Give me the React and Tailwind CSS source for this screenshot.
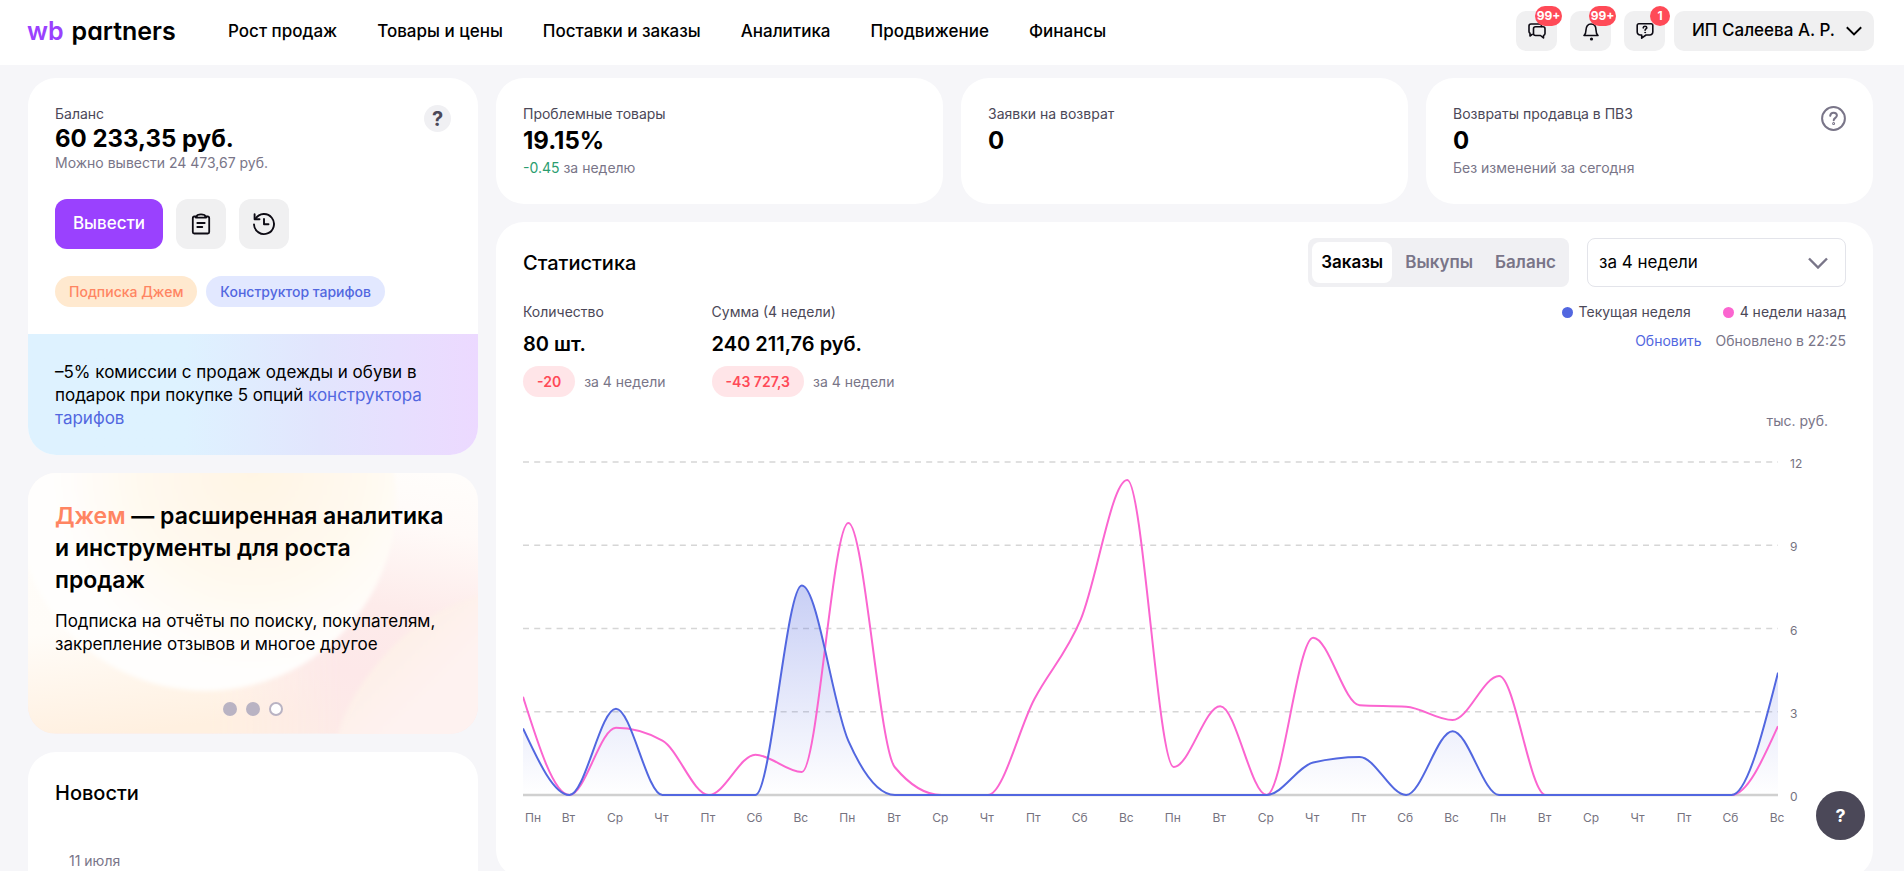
import { useState } from 'react';

const NAV = ['Рост продаж', 'Товары и цены', 'Поставки и заказы', 'Аналитика', 'Продвижение', 'Финансы'];
const TABS = ['Заказы', 'Выкупы', 'Баланс'];
const DAYS = ['Пн', 'Вт', 'Ср', 'Чт', 'Пт', 'Сб', 'Вс'];

const CURRENT = [2.4, 0, 3.11, 0, 0, 0, 7.55, 1.95, 0, 0, 0, 0, 0, 0, 0, 0, 0, 1.17, 1.37, 0, 2.3, 0, 0, 0, 0, 0, 0, 4.41];
const PREVIOUS = [3.54, 0, 2.42, 1.96, 0, 1.45, 0.83, 9.8, 1, 0, 0, 3.45, 6.33, 11.35, 1.01, 3.2, 0, 5.67, 3.23, 3.18, 2.7, 4.29, 0, 0, 0, 0, 0, 2.48];

// Chart geometry
const PLOT_W = 1255;
const PLOT_TOP = 16;
const PLOT_BOTTOM = 349;
const MAX = 12;

const toPoints = (values) =>
  values.map((v, i) => [
    (i * PLOT_W) / (values.length - 1),
    PLOT_BOTTOM - (v / MAX) * (PLOT_BOTTOM - PLOT_TOP),
  ]);

// Monotone cubic interpolation, so the line never dips below zero
function linePath(points) {
  const n = points.length;
  const slope = points.slice(1).map((p, i) => (p[1] - points[i][1]) / (p[0] - points[i][0]));
  const t = points.map((_, i) => {
    if (i === 0 || i === n - 1) return 0;
    const a = slope[i - 1];
    const b = slope[i];
    if (a * b <= 0) return 0;
    return Math.sign(a) * 2 * Math.min(Math.abs(a), Math.abs(b), Math.abs(a + b) / 4);
  });
  t[0] = (3 * slope[0] - t[1]) / 2;
  t[n - 1] = (3 * slope[n - 2] - t[n - 2]) / 2;

  let d = `M${points[0][0]},${points[0][1]}`;
  for (let i = 1; i < n; i++) {
    const [x0, y0] = points[i - 1];
    const [x1, y1] = points[i];
    const dx = (x1 - x0) / 3;
    d += `C${x0 + dx},${y0 + dx * t[i - 1]} ${x1 - dx},${y1 - dx * t[i]} ${x1},${y1}`;
  }
  return d;
}

function OrdersChart() {
  const current = toPoints(CURRENT);
  const currentLine = linePath(current);

  return (
    <svg viewBox="0 0 1323 390" className="block w-full" role="img" aria-label="Заказы, тыс. руб.">
      <defs>
        <linearGradient id="area" x1="0" y1="0" x2="0" y2="1">
          <stop offset="0" stopColor="#5267e0" stopOpacity="0.32" />
          <stop offset="1" stopColor="#5267e0" stopOpacity="0" />
        </linearGradient>
        <clipPath id="plot">
          <rect x="0" y="0" width={PLOT_W} height="360" />
        </clipPath>
      </defs>

      {[12, 9, 6, 3, 0].map((v) => {
        const y = PLOT_BOTTOM - (v / MAX) * (PLOT_BOTTOM - PLOT_TOP);
        return (
          <g key={v}>
            <line
              x1="0"
              x2={PLOT_W}
              y1={y}
              y2={y}
              stroke={v === 0 ? '#d0d0d0' : '#d6d6d6'}
              strokeWidth={v === 0 ? 2.5 : 1.3}
              strokeDasharray={v === 0 ? undefined : '6 5.2'}
            />
            <text x={PLOT_W + 12} y={y + 6} fontSize="12" fill="#76737f">{v}</text>
          </g>
        );
      })}

      <g clipPath="url(#plot)" fill="none" strokeWidth="2" strokeLinejoin="round">
        <path d={`${currentLine}L${PLOT_W},${PLOT_BOTTOM}L0,${PLOT_BOTTOM}Z`} fill="url(#area)" />
        <path d={linePath(toPoints(PREVIOUS))} stroke="#fb65d0" />
        <path d={currentLine} stroke="#5267e0" />
      </g>

      {current.map(([x], i) => (
        <text
          key={i}
          x={i === 0 ? 2 : x - 1}
          y="376"
          fontSize="12"
          fill="#76737f"
          textAnchor={i === 0 ? 'start' : 'middle'}
        >
          {DAYS[i % 7]}
        </text>
      ))}
    </svg>
  );
}

function ChatIcon() {
  return (
    <svg width="20" height="20" viewBox="0 0 20 20" fill="none" stroke="#0d0b14" strokeWidth="1.6" strokeLinejoin="round" strokeLinecap="round">
      <path d="M14.5 5.5V5a2 2 0 0 0-2-2H4a2 2 0 0 0-2 2v5.5a2 2 0 0 0 1 1.700V15l2.200-1.600" />
      <path d="M8.500 5.800h7.500a2 2 0 0 1 2 2v4.700a2 2 0 0 1-1.500 1.900V17l-3-2.500h-5a2 2 0 0 1-2-2V7.800a2 2 0 0 1 2-2Z" />
    </svg>
  );
}

function BellIcon() {
  return (
    <svg width="20" height="20" viewBox="0 0 20 20" fill="none" stroke="#0d0b14" strokeWidth="1.6" strokeLinejoin="round" strokeLinecap="round">
      <path d="M3 14.500c1.500-1.400 2-3 2-5.500 0-3.600 1.800-6 5-6s5 2.400 5 6c0 2.500.5 4.100 2 5.500Z" />
      <circle cx="10.500" cy="18" r="1.600" fill="#0d0b14" stroke="none" />
    </svg>
  );
}

function QuestionChatIcon() {
  return (
    <svg width="20" height="20" viewBox="0 0 20 20" fill="none" stroke="#0d0b14" strokeWidth="1.6" strokeLinejoin="round" strokeLinecap="round">
      <path d="M3.800 2.800h12.400a1.600 1.600 0 0 1 1.600 1.600v6.600a3 3 0 0 1-3 3H11l-4.300 3.200V14H5.200a3 3 0 0 1-3-3V4.400a1.600 1.600 0 0 1 1.600-1.600Z" />
      <path d="M8.200 6.900c.1-1 .8-1.600 1.800-1.600s1.800.6 1.800 1.500c0 1.100-1.700 1.200-1.700 2.400" />
      <circle cx="10.100" cy="11.500" r=".5" fill="#0d0b14" strokeWidth=".8" />
    </svg>
  );
}

function ClipboardIcon() {
  return (
    <svg width="24" height="24" viewBox="0 0 24 24" fill="none" stroke="#0d0b14" strokeWidth="1.8" strokeLinejoin="round" strokeLinecap="round">
      <path d="M7.500 4.500H5.200a1.400 1.400 0 0 0-1.400 1.400v14.200a1.400 1.400 0 0 0 1.400 1.400h13.600a1.400 1.400 0 0 0 1.400-1.400V5.900a1.400 1.400 0 0 0-1.400-1.400h-2.300" />
      <path d="M6.800 5.600 8.500 3Q12 1.600 15.500 3l1.700 2.600Z" />
      <path d="M8.300 11h7.400M8.300 15h5" />
    </svg>
  );
}

function HistoryIcon() {
  return (
    <svg width="24" height="24" viewBox="0 0 24 24" fill="none" stroke="#0d0b14" strokeWidth="1.9" strokeLinejoin="round" strokeLinecap="round">
      <path d="M3.600 6.600A10 10 0 1 1 2 12.500" />
      <path d="M2.600 2.300v4.900h4.900" />
      <path d="M12 7v5.300h4.500" />
    </svg>
  );
}

function Chevron({ className }) {
  return (
    <svg viewBox="0 0 20 12" className={className} fill="none" stroke="currentColor" strokeWidth="2.4" aria-hidden="true">
      <path d="M1 1.500 10 10.500 19 1.500" />
    </svg>
  );
}

function HeaderButton({ label, badge, children }) {
  return (
    <button type="button" aria-label={label} className="relative flex h-10 w-[41px] items-center justify-center rounded-[10px] bg-[#f0f0f1]">
      {children}
      <span
        className={`absolute -top-[5px] flex h-5 items-center justify-center rounded-full bg-[#ff4a57] text-xs font-bold text-white ${
          badge.length > 1 ? 'left-[19px] w-[27px]' : 'left-[26px] w-5'
        }`}
      >
        {badge}
      </span>
    </button>
  );
}

function Header() {
  return (
    <header className="flex h-[65px] items-center bg-white pl-[27px] pr-[30px]">
      <a href="#" className="-mt-1 mr-[53px] flex w-[148px] shrink-0 gap-2 text-[25px] leading-6 font-semibold whitespace-nowrap [font-feature-settings:'cv11']">
        <span className="text-[#9a41fe]">wb</span>
        <span>partners</span>
      </a>
      <nav className="-mt-0.5 flex gap-10 text-[17px] font-medium whitespace-nowrap">
        {NAV.map((item) => (
          <a key={item} href="#">{item}</a>
        ))}
      </nav>
      <div className="-mt-[3px] ml-auto flex items-center gap-[13px]">
        <HeaderButton label="Чаты" badge="99+"><ChatIcon /></HeaderButton>
        <HeaderButton label="Уведомления" badge="99+"><BellIcon /></HeaderButton>
        <HeaderButton label="Вопросы" badge="1"><QuestionChatIcon /></HeaderButton>
        <button type="button" className="-ml-1 flex h-10 w-[200px] items-center justify-between rounded-[10px] bg-[#f0f0f1] pr-3 pl-[18px] text-[17px] font-medium whitespace-nowrap">
          ИП Салеева А. Р.
          <Chevron className="w-4" />
        </button>
      </div>
    </header>
  );
}

function BalanceCard() {
  return (
    <section className="overflow-hidden rounded-[28px] bg-white">
      <div className="px-[27px] pt-[26px] pb-[27px]">
        <div className="flex justify-between">
          <div>
            <h2 className="text-sm leading-5 text-[#4b4858]">Баланс</h2>
            <p className="text-2xl leading-[30px] font-bold">60 233,35 руб.</p>
            <p className="text-sm leading-[18px] text-[#797588]">Можно вывести 24 473,67 руб.</p>
          </div>
          <button type="button" aria-label="Помощь" className="mt-px flex h-[27px] w-[27px] items-center justify-center rounded-full bg-[#f0f0f3] text-xl leading-none font-bold text-[#4b4858]">?</button>
        </div>
        <div className="mt-[27px] flex gap-[13px]">
          <button type="button" className="h-[50px] w-[108px] rounded-xl bg-[#9a41fe] text-[17px] font-medium text-white">Вывести</button>
          <button type="button" aria-label="Отчёты" className="flex h-[50px] w-[50px] items-center justify-center rounded-xl bg-[#f0f0f1]"><ClipboardIcon /></button>
          <button type="button" aria-label="История" className="flex h-[50px] w-[50px] items-center justify-center rounded-xl bg-[#f0f0f1]"><HistoryIcon /></button>
        </div>
        <div className="mt-[27px] flex gap-[9px] text-sm font-medium whitespace-nowrap">
          <a href="#" className="flex h-[31px] items-center rounded-full bg-[#ffe9cf] px-3.5 text-[#ff8562]">Подписка Джем</a>
          <a href="#" className="flex h-[31px] items-center rounded-full bg-[#e2e8ff] px-3.5 text-[#5267e0]">Конструктор тарифов</a>
        </div>
      </div>
      <p className="bg-linear-to-r from-[#def2ff] from-35% via-[#e2e5fd] via-65% to-[#ecd9ff] px-[27px] pt-[27px] pb-[26px] text-[17px] leading-[23px]">
        –5% комиссии с продаж одежды и обуви в подарок при покупке 5 опций <a href="#" className="text-[#5267e0]">конструктора тарифов</a>
      </p>
    </section>
  );
}

function JamBackground() {
  return (
    <svg viewBox="0 0 450 261" preserveAspectRatio="none" className="absolute inset-0 h-full w-full" aria-hidden="true">
      <defs>
        <linearGradient id="jamBase" x1="0.9" y1="0" x2="0.6" y2="1">
          <stop offset="0" stopColor="#fffdfb" />
          <stop offset="0.2" stopColor="#fffaf8" />
          <stop offset="0.5" stopColor="#fdebea" />
          <stop offset="0.75" stopColor="#fde8e9" />
          <stop offset="1" stopColor="#fdebe8" />
        </linearGradient>
        <linearGradient id="jamLeft" x1="0" y1="0" x2="0.2" y2="1">
          <stop offset="0" stopColor="#fffdf9" />
          <stop offset="0.6" stopColor="#fffcf8" />
          <stop offset="1" stopColor="#fff0e0" />
        </linearGradient>
        <linearGradient id="jamFade" x1="0" x2="1" y1="0" y2="0">
          <stop offset="0.4" stopColor="#fff" />
          <stop offset="0.7" stopColor="#000" />
        </linearGradient>
        <mask id="jamMask">
          <rect width="450" height="261" fill="url(#jamFade)" />
        </mask>
        <radialGradient id="jamDisc" cx="0.62" cy="0.42" r="0.58">
          <stop offset="0" stopColor="#fff5e4" />
          <stop offset="0.5" stopColor="#fff9ef" />
          <stop offset="0.9" stopColor="#fffefd" />
        </radialGradient>
        <linearGradient id="jamCorner" x1="0" y1="0" x2="1" y2="1">
          <stop offset="0.2" stopColor="#fdefe3" />
          <stop offset="0.6" stopColor="#fef2f0" />
        </linearGradient>
        <filter id="jamSoft" x="-10%" y="-10%" width="120%" height="120%">
          <feGaussianBlur stdDeviation="2" />
        </filter>
      </defs>
      <rect width="450" height="261" fill="url(#jamBase)" />
      <rect width="450" height="261" fill="url(#jamLeft)" mask="url(#jamMask)" />
      <path d="M306 280C312 235 345 190 380 160 410 137 435 126 470 118V280Z" fill="url(#jamCorner)" filter="url(#jamSoft)" />
      <circle cx="178" cy="28" r="190" fill="url(#jamDisc)" filter="url(#jamSoft)" />
    </svg>
  );
}

function JamCard() {
  return (
    <section className="relative overflow-hidden rounded-[28px]">
      <JamBackground />
      <div className="relative px-[27px] pt-[27px] pb-[18px]">
        <h2 className="text-[23px] leading-8 font-semibold">
          <span className="text-[#ff8562]">Джем</span> — расширенная аналитика и инструменты для роста
          <br />
          продаж
        </h2>
        <p className="mt-3.5 text-[17px] leading-[23px]">
          Подписка на отчёты по поиску, покупателям, закрепление отзывов и многое другое
        </p>
        <div className="mt-[46px] flex justify-center gap-[9px]">
          <button type="button" aria-label="Слайд 1" className="h-3.5 w-3.5 rounded-full bg-[#b9b3c3]" />
          <button type="button" aria-label="Слайд 2" className="h-3.5 w-3.5 rounded-full bg-[#b9b3c3]" />
          <button type="button" aria-label="Слайд 3" className="h-3.5 w-3.5 rounded-full border-2 border-[#b9b3c3] bg-white" />
        </div>
      </div>
    </section>
  );
}

function NewsCard() {
  return (
    <section className="flex-1 rounded-t-[28px] bg-white px-[27px] pt-[27px]">
      <h2 className="text-xl leading-7 font-medium">Новости</h2>
      <p className="mt-11 pl-3.5 text-sm leading-5 text-[#797588]">11 июля</p>
    </section>
  );
}

function InfoCard({ title, value, help, children }) {
  return (
    <section className="flex h-[126px] justify-between rounded-[28px] bg-white px-[27px] pt-[26px]">
      <div>
        <h2 className="text-sm leading-5 text-[#4b4858]">{title}</h2>
        <p className="mt-[3px] text-2xl leading-7 font-bold">{value}</p>
        <p className="mt-[3px] text-sm leading-5 text-[#797588]">{children}</p>
      </div>
      {help && (
        <button type="button" aria-label="Помощь" className="mt-0.5 h-[25px]">
          <svg width="25" height="25" viewBox="0 0 25 25" fill="none" stroke="#797588" strokeWidth="2" strokeLinecap="round">
            <circle cx="12.500" cy="12.500" r="11.400" />
            <path d="M9.200 9.800c.2-1.900 1.500-3.100 3.400-3.100 1.900 0 3.300 1.200 3.300 2.900 0 2.200-3.200 2.400-3.200 4.700" />
            <circle cx="12.600" cy="17.600" r=".5" />
          </svg>
        </button>
      )}
    </section>
  );
}

function Metric({ title, value, diff }) {
  return (
    <div>
      <h3 className="text-sm leading-5 text-[#4b4858]">{title}</h3>
      <p className="mt-2.5 text-xl leading-6 font-semibold">{value}</p>
      <div className="mt-2.5 flex items-center gap-[9px]">
        <span className="flex h-[31px] items-center rounded-full bg-[#ffe5e8] px-3.5 text-sm font-semibold text-[#ff4a57]">{diff}</span>
        <span className="text-sm text-[#797588]">за 4 недели</span>
      </div>
    </div>
  );
}

function Statistics() {
  const [tab, setTab] = useState('Заказы');

  return (
    <section className="rounded-[28px] bg-white px-[27px] pt-4 pb-[42px]">
      <div className="flex items-center">
        <h2 className="text-xl font-medium">Статистика</h2>
        <div className="ml-auto flex h-[49px] gap-1 rounded-lg bg-[#f0f0f3] p-1">
          {TABS.map((name) => (
            <button
              key={name}
              type="button"
              onClick={() => setTab(name)}
              className={`rounded-lg px-[9px] text-[17px] font-semibold ${tab === name ? 'bg-white text-black' : 'text-[#797588]'}`}
            >
              {name}
            </button>
          ))}
        </div>
        <div className="relative ml-[18px] w-[259px]">
          <select aria-label="Период" className="block h-[49px] w-full appearance-none rounded-lg border border-[#e3e4ea] bg-white px-[11px] text-[17px]">
            <option>за 4 недели</option>
          </select>
          <Chevron className="pointer-events-none absolute top-[19px] right-[18px] w-5 text-[#797588]" />
        </div>
      </div>

      <div className="mt-[15px] flex justify-between">
        <div className="flex gap-[46px]">
          <Metric title="Количество" value="80 шт." diff="-20" />
          <Metric title="Сумма (4 недели)" value="240 211,76 руб." diff="-43 727,3" />
        </div>
        <div className="flex flex-col items-end text-sm leading-5">
          <ul className="flex gap-8 text-[#4b4858]">
            <li className="flex items-center gap-1.5"><i className="h-[11px] w-[11px] rounded-full bg-[#5267e0]" />Текущая неделя</li>
            <li className="flex items-center gap-1.5"><i className="h-[11px] w-[11px] rounded-full bg-[#fb65d0]" />4 недели назад</li>
          </ul>
          <div className="mt-[9px] flex gap-3.5">
            <button type="button" className="text-[#5267e0]">Обновить</button>
            <span className="text-[#797588]">Обновлено в 22:25</span>
          </div>
        </div>
      </div>

      <p className="mt-3.5 mb-[15px] pr-[18px] text-right text-sm leading-5 text-[#797588]">тыс. руб.</p>
      <OrdersChart />
    </section>
  );
}

export default function App() {
  return (
    <div className="flex h-screen flex-col overflow-hidden bg-[#f6f6f9] font-[Inter,sans-serif] text-black">
      <Header />
      <main className="flex min-h-0 flex-1 gap-[18px] pt-[13px] pl-7 pr-[31px]">
        <div className="flex w-[450px] shrink-0 flex-col gap-[18px]">
          <BalanceCard />
          <JamCard />
          <NewsCard />
        </div>
        <div className="flex min-w-0 flex-1 flex-col gap-[18px]">
          <div className="grid shrink-0 grid-cols-3 gap-[18px]">
            <InfoCard title="Проблемные товары" value="19.15%">
              <span className="text-[#2a9d6f]">-0.45</span> за неделю
            </InfoCard>
            <InfoCard title="Заявки на возврат" value="0" />
            <InfoCard title="Возвраты продавца в ПВЗ" value="0" help>Без изменений за сегодня</InfoCard>
          </div>
          <Statistics />
        </div>
      </main>
      <button type="button" aria-label="Поддержка" className="fixed right-[39px] bottom-[31px] flex h-[49px] w-[49px] items-center justify-center rounded-full bg-[#4b4858] text-lg font-bold text-white">?</button>
    </div>
  );
}
